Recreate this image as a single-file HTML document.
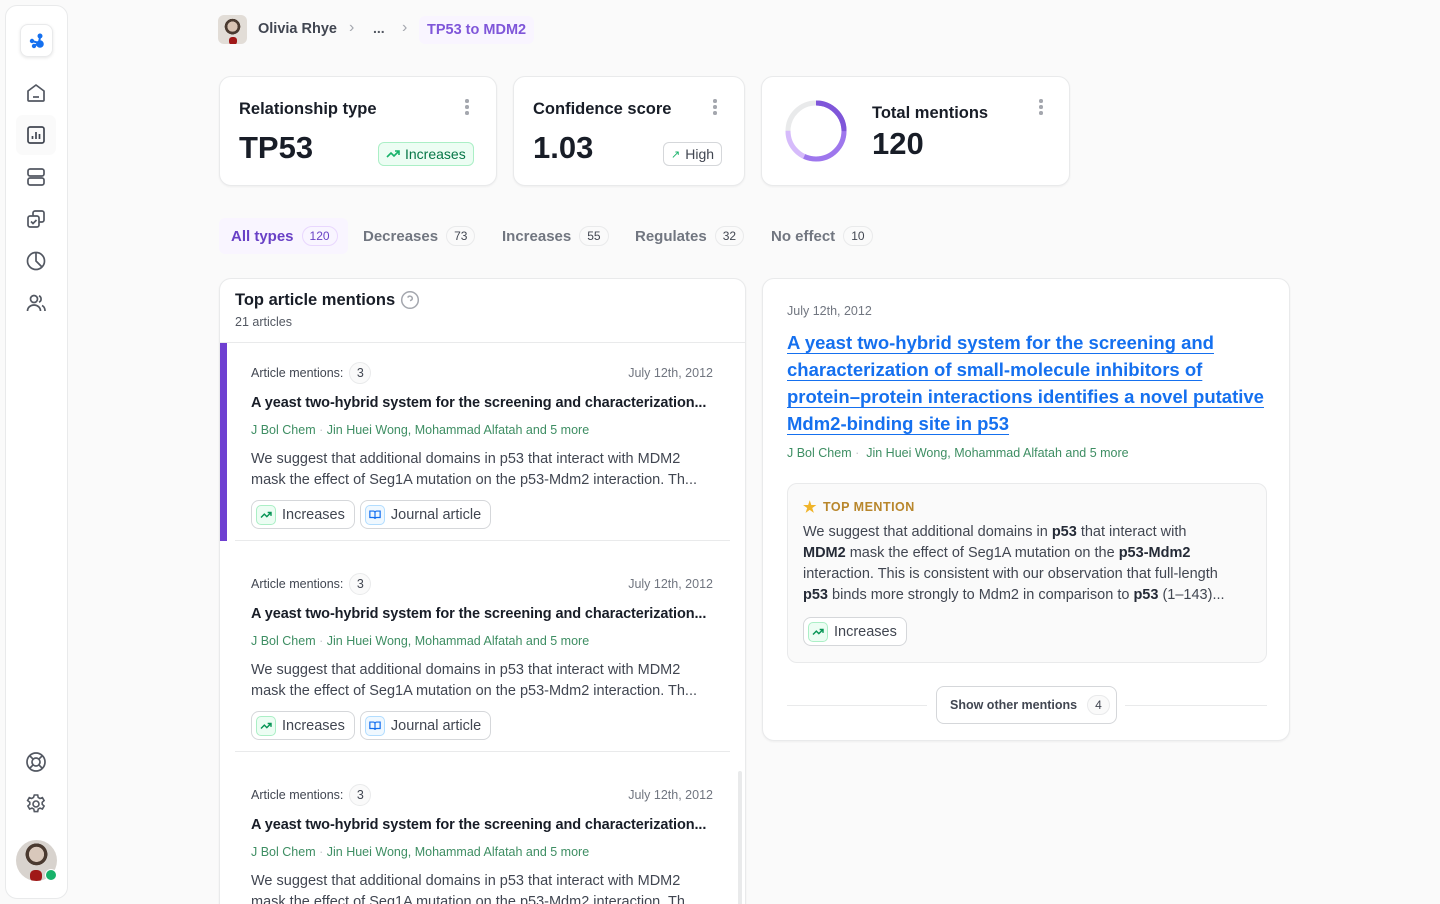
<!DOCTYPE html>
<html style="width:1440px;height:904px;overflow:hidden"><head><meta charset="utf-8">
<style>
*{box-sizing:border-box;margin:0;padding:0}
body{width:1440px;height:904px;overflow:hidden;background:#fafafa;font-family:"Liberation Sans",sans-serif;color:#181d27;position:relative}
.abs{position:absolute}
.side{left:5px;top:5px;width:63px;height:894px;background:#fff;border:1px solid #e9eaeb;border-radius:12px}
.ic{position:absolute;left:18px;width:24px;height:24px}
.card{background:#fff;border:1px solid #e9eaeb;border-radius:12px;box-shadow:0 1px 2px rgba(10,13,18,.05)}
.dots{position:absolute;width:4px;height:16px}
.dots i{display:block;width:3.5px;height:3.5px;border-radius:50%;background:#a4a7ae;margin-bottom:2.5px}
.tab{position:absolute;top:218px;height:36px;display:flex;align-items:center;font-size:15px;color:#717680;font-weight:600;padding:0 12px;white-space:nowrap}
.cnt{display:inline-block;margin-left:8px;border:1px solid #e9eaeb;background:#fafafa;border-radius:12px;font-size:12px;padding:2px 7px;color:#414651;font-weight:500}
.item{position:absolute;left:220px;width:525px;height:211px}
.row1{position:absolute;left:31px;top:20px;right:32px;height:22px;font-size:12.5px;color:#414651;display:flex;align-items:center}
.row1 .n{display:inline-flex;width:22px;height:22px;border:1px solid #e9eaeb;border-radius:11px;align-items:center;justify-content:center;margin-left:6px;background:#fafafa}
.row1 .d{margin-left:auto;color:#717680}
.tt{position:absolute;left:31px;top:53px;font-size:14.5px;font-weight:700;white-space:nowrap;letter-spacing:-.1px}
.au{position:absolute;left:31px;top:81px;font-size:12.5px;color:#3e8e63;white-space:nowrap}
.bd{position:absolute;left:31px;top:107px;font-size:14.5px;line-height:21px;color:#414651;width:480px;white-space:nowrap}
.chips{position:absolute;left:31px;top:158px;display:flex;gap:5px}
.chip{height:29px;border:1px solid #d5d7da;border-radius:8px;display:flex;align-items:center;padding:0 9px 0 4px;font-size:14.5px;color:#414651;background:#fff}
.chip .b{width:20px;height:20px;border-radius:5px;display:flex;align-items:center;justify-content:center;margin-right:6px}
.g{background:#ecfdf3;border:1px solid #abefc6}
.bl{background:#eff8ff;border:1px solid #b2ddff}
.hr{position:absolute;left:15px;right:15px;height:1px;background:#e9eaeb}
</style></head><body>
<div class="abs side">
  <div class="abs" style="left:14px;top:18px;width:33px;height:33px;border:1px solid #e9eaeb;border-radius:8px;box-shadow:0 1px 3px rgba(0,0,0,.1)">
    <svg width="33" height="33" viewBox="0 0 33 33" style="position:absolute;left:-1px;top:-1px"><g stroke="#1570ef" stroke-width="2"><line x1="19" y1="19" x2="20" y2="13"/><line x1="19" y1="19" x2="12" y2="17"/><line x1="19" y1="19" x2="14" y2="22"/></g><circle cx="20" cy="12" r="2.5" fill="#1570ef"/><circle cx="12" cy="17" r="2.2" fill="#1570ef"/><circle cx="14" cy="22" r="2.2" fill="#1570ef"/><circle cx="20" cy="20" r="3.8" fill="#1570ef"/></svg>
  </div>
  <svg class="ic" style="top:75px" viewBox="0 0 24 24" fill="none" stroke="#535862" stroke-width="1.7" stroke-linejoin="round"><path d="M4 10l8-6 8 6v9a1 1 0 0 1-1 1H5a1 1 0 0 1-1-1z"/><path d="M9 16h6"/></svg>
  <div class="abs" style="left:10px;top:109px;width:40px;height:40px;background:#fafafa;border-radius:7px"></div>
  <svg class="ic" style="top:117px" viewBox="0 0 24 24" fill="none" stroke="#414651" stroke-width="1.7"><rect x="4" y="4" width="16" height="16" rx="2"/><path d="M8.5 16v-3M12 16V9M15.5 16v-5"/></svg>
  <svg class="ic" style="top:159px" viewBox="0 0 24 24" fill="none" stroke="#535862" stroke-width="1.7"><rect x="4" y="4" width="16" height="7" rx="2"/><rect x="4" y="13" width="16" height="7" rx="2"/></svg>
  <svg class="ic" style="top:201px" viewBox="0 0 24 24" fill="none" stroke="#535862" stroke-width="1.7"><rect x="4" y="9" width="11" height="11" rx="2"/><path d="M9 9V6a2 2 0 0 1 2-2h7a2 2 0 0 1 2 2v7a2 2 0 0 1-2 2h-3"/><path d="M7 14.5l2 2 3.5-3.5"/></svg>
  <svg class="ic" style="top:243px" viewBox="0 0 24 24" fill="none" stroke="#535862" stroke-width="1.7"><circle cx="12" cy="12" r="8.5"/><path d="M12 3.5V12l6 6"/></svg>
  <svg class="ic" style="top:285px" viewBox="0 0 24 24" fill="none" stroke="#535862" stroke-width="1.7"><circle cx="10" cy="8" r="3.5"/><path d="M3.5 20c0-3.5 3-6 6.5-6s6.5 2.5 6.5 6"/><path d="M15 4.8a3.5 3.5 0 0 1 0 6.4M18 14.5c1.8.8 3 2.8 3 5.5"/></svg>
  <svg class="ic" style="top:744px" viewBox="0 0 24 24" fill="none" stroke="#535862" stroke-width="1.7"><circle cx="12" cy="12" r="9"/><circle cx="12" cy="12" r="4"/><path d="M5.6 5.6l3.6 3.6M18.4 5.6l-3.6 3.6M5.6 18.4l3.6-3.6M18.4 18.4l-3.6-3.6"/></svg>
  <svg class="ic" style="top:786px" viewBox="0 0 24 24" fill="none" stroke="#535862" stroke-width="1.6"><circle cx="12" cy="12" r="3"/><path d="M10.3 3h3.4l.5 2.5 1.8 1 2.4-.9 1.7 3-1.9 1.7v2l1.9 1.7-1.7 3-2.4-.9-1.8 1-.5 2.5h-3.4l-.5-2.5-1.8-1-2.4.9-1.7-3 1.9-1.7v-2L3.6 8.6l1.7-3 2.4.9 1.8-1z"/></svg>
  <div class="abs" style="left:10px;top:834px;width:41px;height:41px;border-radius:50%;background:radial-gradient(circle at 50% 35%,#d9c8bb 0 22%,#4a3a30 23% 32%,#d8d3ce 33%);overflow:hidden"><div style="position:absolute;left:14px;top:30px;width:12px;height:12px;background:#a01818;border-radius:40%"></div></div>
  <div class="abs" style="left:39px;top:863px;width:12px;height:12px;border-radius:50%;background:#17b26a;border:1.5px solid #fff"></div>
</div>

<!-- breadcrumb -->
<div class="abs" style="left:218px;top:15px;width:29px;height:29px;border-radius:6px;background:radial-gradient(circle at 50% 40%,#d8c3b3 0 22%,#4a3a30 23% 34%,#e2ddd7 35%);overflow:hidden"><div style="position:absolute;left:11px;top:22px;width:8px;height:8px;background:#a01818;border-radius:40%"></div></div>
<div class="abs" style="left:258px;top:21px;font-size:14.5px;font-weight:600;color:#414651">Olivia Rhye</div>
<div class="abs" style="left:349px;top:19px;font-size:16px;color:#a4a7ae">›</div>
<div class="abs" style="left:373px;top:20px;font-size:14px;font-weight:700;color:#535862">...</div>
<div class="abs" style="left:402px;top:19px;font-size:16px;color:#a4a7ae">›</div>
<div class="abs" style="left:419px;top:16px;height:28px;padding:0 8px;background:#f9f5ff;border-radius:6px;font-size:14.5px;font-weight:600;color:#7f56d9;line-height:28px">TP53 to MDM2</div>

<!-- cards -->
<div class="abs card" style="left:219px;top:76px;width:278px;height:110px">
  <div class="abs" style="left:19px;top:23px;font-size:16.5px;font-weight:600">Relationship type</div>
  <div class="dots" style="left:245px;top:22px"><i></i><i></i><i></i></div>
  <div class="abs" style="left:19px;top:53px;font-size:31px;font-weight:600">TP53</div>
  <div class="abs" style="left:158px;top:65px;height:24px;padding:0 7px;border:1px solid #abefc6;background:#ecfdf3;border-radius:6px;font-size:14px;color:#067647;display:flex;align-items:center"><svg width="14" height="12" viewBox="0 0 14 12" fill="none" stroke="#17b26a" stroke-width="1.6" style="margin-right:5px"><path d="M1 9l4-4 3 3 5-5M9 3h4v4"/></svg>Increases</div>
</div>
<div class="abs card" style="left:513px;top:76px;width:232px;height:110px">
  <div class="abs" style="left:19px;top:23px;font-size:16.5px;font-weight:600">Confidence score</div>
  <div class="dots" style="left:199px;top:22px"><i></i><i></i><i></i></div>
  <div class="abs" style="left:19px;top:53px;font-size:31px;font-weight:600">1.03</div>
  <div class="abs" style="left:149px;top:65px;height:24px;padding:0 7px;border:1px solid #d5d7da;background:#fff;border-radius:6px;font-size:14px;color:#414651;display:flex;align-items:center"><span style="color:#17b26a;font-size:11px;margin-right:5px">↗</span>High</div>
</div>
<div class="abs card" style="left:761px;top:76px;width:309px;height:110px">
  <svg class="abs" style="left:22px;top:22px" width="64" height="64" viewBox="0 0 64 64"><circle cx="32" cy="32" r="28" fill="none" stroke="#e9eaeb" stroke-width="5"/><circle cx="32" cy="32" r="28" fill="none" stroke="#d6bbfb" stroke-width="5" stroke-dasharray="132 176" transform="rotate(-90 32 32)"/><circle cx="32" cy="32" r="28" fill="none" stroke="#9e77ed" stroke-width="5" stroke-dasharray="100 176" transform="rotate(-90 32 32)"/><circle cx="32" cy="32" r="28" fill="none" stroke="#7f56d9" stroke-width="5" stroke-dasharray="44 176" transform="rotate(-90 32 32)"/></svg>
  <div class="abs" style="left:110px;top:27px;font-size:16.5px;font-weight:600">Total mentions</div>
  <div class="dots" style="left:277px;top:22px"><i></i><i></i><i></i></div>
  <div class="abs" style="left:110px;top:49px;font-size:31px;font-weight:600">120</div>
</div>

<!-- tabs -->
<div class="tab" style="left:219px;width:129px;background:#f9f5ff;border-radius:6px;color:#6941c6">All types<span class="cnt" style="background:#f9f5ff;border-color:#e9d7fe;color:#6941c6">120</span></div>
<div class="tab" style="left:351px">Decreases<span class="cnt">73</span></div>
<div class="tab" style="left:490px">Increases<span class="cnt">55</span></div>
<div class="tab" style="left:623px">Regulates<span class="cnt">32</span></div>
<div class="tab" style="left:759px">No effect<span class="cnt">10</span></div>

<!-- left panel -->
<div class="abs card" style="left:219px;top:278px;width:527px;height:626px;border-radius:12px 12px 0 0;overflow:hidden;border-bottom:none">
  <div class="abs" style="left:15px;top:11px;font-size:16.5px;font-weight:600;display:flex;align-items:center">Top article mentions<svg width="20" height="20" viewBox="0 0 20 20" fill="none" stroke="#a4a7ae" stroke-width="1.5" style="margin-left:5px"><circle cx="10" cy="10" r="8.3"/><path d="M7.7 7.6a2.4 2.4 0 0 1 4.6.8c0 1.6-2.3 2.2-2.3 2.2M10 13.8h.01"/></svg></div>
  <div class="abs" style="left:15px;top:36px;font-size:12.5px;color:#535862">21 articles</div>
  <div class="abs" style="left:0;right:0;top:63px;height:1px;background:#e9eaeb"></div>
  <div class="abs" style="left:0;top:64px;width:7px;height:198px;background:#6e3fd1"></div>
  <div class="abs" style="left:518px;top:492px;width:4px;height:160px;background:#e9eaeb;border-radius:2px"></div>
</div>

<div class="item" style="top:342px">
  <div class="row1">Article mentions:<span class="n">3</span><span class="d">July 12th, 2012</span></div>
  <div class="tt">A yeast two-hybrid system for the screening and characterization...</div>
  <div class="au">J Bol Chem <span style="color:#c4c6ca">·</span> Jin Huei Wong, Mohammad Alfatah and 5 more</div>
  <div class="bd">We suggest that additional domains in p53 that interact with MDM2<br>mask the effect of Seg1A mutation on the p53-Mdm2 interaction. Th...</div>
  <div class="chips"><div class="chip"><span class="b g"><svg width="12" height="10" viewBox="0 0 14 12" fill="none" stroke="#079455" stroke-width="1.7"><path d="M1 9l4-4 3 3 5-5M9 3h4v4"/></svg></span>Increases</div><div class="chip"><span class="b bl"><svg width="12" height="11" viewBox="0 0 14 12" fill="none" stroke="#1570ef" stroke-width="1.4"><path d="M1 2h4a2 2 0 0 1 2 2v7a2 2 0 0 0-2-1.5H1zM13 2H9a2 2 0 0 0-2 2v7a2 2 0 0 1 2-1.5h4z"/></svg></span>Journal article</div></div>
  <div class="hr" style="top:198px"></div>
</div>
<div class="item" style="top:553px">
  <div class="row1">Article mentions:<span class="n">3</span><span class="d">July 12th, 2012</span></div>
  <div class="tt">A yeast two-hybrid system for the screening and characterization...</div>
  <div class="au">J Bol Chem <span style="color:#c4c6ca">·</span> Jin Huei Wong, Mohammad Alfatah and 5 more</div>
  <div class="bd">We suggest that additional domains in p53 that interact with MDM2<br>mask the effect of Seg1A mutation on the p53-Mdm2 interaction. Th...</div>
  <div class="chips"><div class="chip"><span class="b g"><svg width="12" height="10" viewBox="0 0 14 12" fill="none" stroke="#079455" stroke-width="1.7"><path d="M1 9l4-4 3 3 5-5M9 3h4v4"/></svg></span>Increases</div><div class="chip"><span class="b bl"><svg width="12" height="11" viewBox="0 0 14 12" fill="none" stroke="#1570ef" stroke-width="1.4"><path d="M1 2h4a2 2 0 0 1 2 2v7a2 2 0 0 0-2-1.5H1zM13 2H9a2 2 0 0 0-2 2v7a2 2 0 0 1 2-1.5h4z"/></svg></span>Journal article</div></div>
  <div class="hr" style="top:198px"></div>
</div>
<div class="item" style="top:764px;height:140px;overflow:hidden">
  <div class="row1">Article mentions:<span class="n">3</span><span class="d">July 12th, 2012</span></div>
  <div class="tt">A yeast two-hybrid system for the screening and characterization...</div>
  <div class="au">J Bol Chem <span style="color:#c4c6ca">·</span> Jin Huei Wong, Mohammad Alfatah and 5 more</div>
  <div class="bd">We suggest that additional domains in p53 that interact with MDM2<br>mask the effect of Seg1A mutation on the p53-Mdm2 interaction. Th...</div>
</div>

<!-- right panel -->
<div class="abs card" style="left:762px;top:278px;width:528px;height:463px">
  <div class="abs" style="left:24px;top:25px;font-size:12.5px;color:#717680">July 12th, 2012</div>
  <div class="abs" style="left:24px;top:50px;font-size:18.5px;line-height:27px;font-weight:700;color:#1570ef;text-decoration:underline;text-underline-offset:4px;white-space:nowrap">A yeast two-hybrid system for the screening and<br>characterization of small-molecule inhibitors of<br>protein–protein interactions identifies a novel putative<br>Mdm2-binding site in p53</div>
  <div class="abs" style="left:24px;top:167px;font-size:12.5px;color:#3e8e63;white-space:nowrap">J Bol Chem <span style="color:#c4c6ca">·</span> &nbsp;Jin Huei Wong, Mohammad Alfatah and 5 more</div>
  <div class="abs" style="left:24px;top:204px;width:480px;height:180px;border:1px solid #e9eaeb;border-radius:10px;background:#fafafa">
    <div class="abs" style="left:15px;top:14px;font-size:12.5px;font-weight:700;color:#b8862b;letter-spacing:.5px;display:flex;align-items:center"><span style="color:#f0b429;font-size:15px;margin-right:6px">★</span>TOP MENTION</div>
    <div class="abs" style="left:15px;top:38px;font-size:14.5px;line-height:21px;color:#414651;white-space:nowrap">We suggest that additional domains in <b style="color:#252b37">p53</b> that interact with<br><b style="color:#252b37">MDM2</b> mask the effect of Seg1A mutation on the <b style="color:#252b37">p53-Mdm2</b><br>interaction. This is consistent with our observation that full-length<br><b style="color:#252b37">p53</b> binds more strongly to Mdm2 in comparison to <b style="color:#252b37">p53</b> (1–143)...</div>
    <div class="chip abs" style="left:15px;top:133px"><span class="b g"><svg width="12" height="10" viewBox="0 0 14 12" fill="none" stroke="#079455" stroke-width="1.7"><path d="M1 9l4-4 3 3 5-5M9 3h4v4"/></svg></span>Increases</div>
  </div>
  <div class="abs" style="left:24px;top:426px;width:140px;height:1px;background:#e9eaeb"></div>
  <div class="abs" style="left:362px;top:426px;width:142px;height:1px;background:#e9eaeb"></div>
  <div class="abs" style="left:173px;top:407px;width:181px;height:38px;border:1px solid #d5d7da;border-radius:8px;background:#fff;display:flex;align-items:center;padding-left:13px;font-size:12.5px;font-weight:600;color:#414651">Show other mentions<span class="cnt" style="margin-left:10px">4</span></div>
</div>
</body></html>
